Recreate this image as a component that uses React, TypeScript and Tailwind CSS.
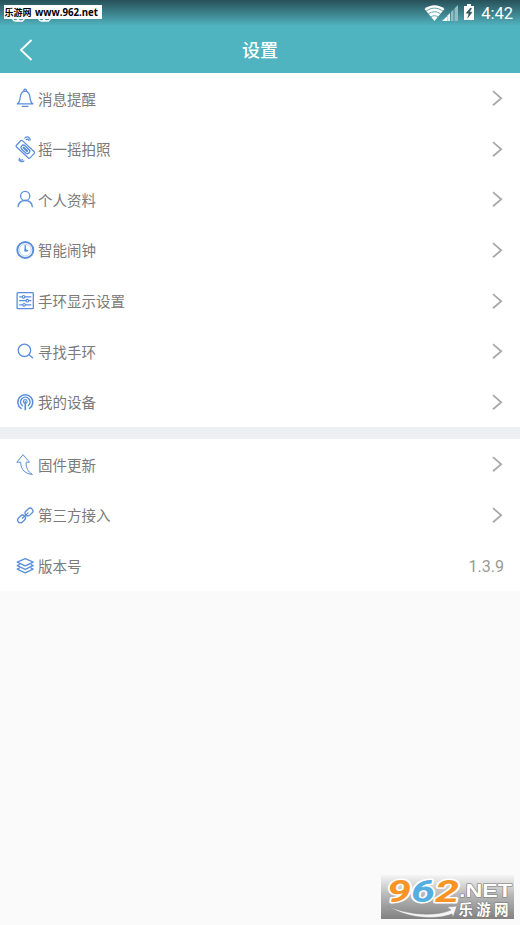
import type { ReactNode } from 'react';

interface SettingItem {
  label: string;
  icon: ReactNode;
  value?: string;
}

function Icon({ children }: { children: ReactNode }) {
  return (
    <svg
      className="h-5 w-5 shrink-0 overflow-visible"
      viewBox="0 0 20 20"
      fill="none"
      stroke="#5a8edb"
      strokeWidth="1.3"
      strokeLinecap="round"
      strokeLinejoin="round"
    >
      {children}
    </svg>
  );
}

const bell = (
  <Icon>
    <path d="M2.3 15.9h15.6c-2-1-2.3-2.4-2.6-4.5-.3-4.2-.9-8.2-5.2-8.2s-4.9 4-5.2 8.2c-.3 2.1-.6 3.5-2.6 4.5Z" />
    <path d="M8.9 3.1c-.6-2.6 3-2.6 2.4 0M7.3 18.4h5.6" />
  </Icon>
);

const shake = (
  <Icon>
    <g transform="rotate(43 10.3 10.4)">
      <rect x="1" y="6" width="18.6" height="8.6" rx="1.2" strokeWidth="1.2" />
      <rect x="5.2" y="7.9" width="10.2" height="4.8" rx="2.4" strokeWidth="1.3" />
      <path d="M8 10.3h4.6" strokeWidth="2.2" />
    </g>
    <path d="M9.8-.9c2.3-2.1 5-1.1 5.5 1.8M11.2.7c1.2-1.1 2.4-.6 2.7.8M4.2 19.4c.3 1.6 1.8 2.2 3.3 1.3M3.9 21c1.1 2 3.3 2.2 5 .9" strokeWidth="1.2" />
  </Icon>
);

const person = (
  <Icon>
    <circle cx="10.2" cy="6.9" r="4.6" />
    <path d="M3.1 17.7c.4-3.7 3-6.2 7.1-6.2s6.7 2.5 7.1 6.2" />
  </Icon>
);

const clock = (
  <Icon>
    <circle cx="10.3" cy="10" r="8" strokeWidth="1.9" />
    <circle cx="10.3" cy="10" r="5.9" stroke="#a7c5f1" strokeWidth=".7" />
    <path d="M10.2 5.5v5.2h2.5" />
    <path d="M10.3 9.3v1.4h1.3" strokeWidth="1.8" />
  </Icon>
);

const sliders = (
  <Icon>
    <rect x="2.1" y="1.7" width="16.2" height="16" rx=".8" />
    <path d="M4.6 5.8h2.6M10 5.8h5.9M4.6 9.7h6.3M13.7 9.7h2.2M4.6 13.8h3M10.5 13.8h5.4" strokeWidth="1.2" />
    <circle cx="8.6" cy="5.8" r="1.3" strokeWidth="1.1" />
    <circle cx="12.3" cy="9.7" r="1.3" strokeWidth="1.1" />
    <circle cx="9.1" cy="13.8" r="1.3" strokeWidth="1.1" />
  </Icon>
);

const search = (
  <Icon>
    <circle cx="9.4" cy="9.3" r="6.2" />
    <path d="m14 13.7 3.6 3.1" />
  </Icon>
);

const device = (
  <Icon>
    <path d="M6.1 16.4A7.5 7.5 0 1 1 14.5 16.4" strokeWidth="1.5" />
    <path d="M7.3 13.7a4.8 4.8 0 1 1 6 0" strokeWidth="1.4" />
    <circle cx="10.3" cy="9.5" r="1.9" strokeWidth="1.1" />
    <path d="M10.3 9.8v7.7" strokeWidth="1.7" />
  </Icon>
);

const update = (
  <Icon>
    <path d="M8.3 1 14.5 8.2h-3.4c-.3 5.3 1.7 9.6 6.3 12.2-6.6-.4-11.8-4.5-11.7-12.2H2.2Z" strokeWidth="1" />
  </Icon>
);

const link = (
  <Icon>
    <g transform="rotate(-43 10.2 10.6)">
      <rect x=".9" y="7.8" width="8.6" height="5.6" rx="2.8" />
      <rect x="11.1" y="7.8" width="8.6" height="5.6" rx="2.8" />
      <path d="M6.4 10.6h7.8" />
    </g>
  </Icon>
);

const layers = (
  <Icon>
    <path d="m10.2 3.6 8 3.5-8 3.8-8-3.8ZM4.3 9.6l-2.1 1 8 3.8 8-3.8-2.1-1M4.3 13.1l-2.1 1 8 3.8 8-3.8-2.1-1" strokeWidth="1.2" />
  </Icon>
);

const mainItems: SettingItem[] = [
  { label: '消息提醒', icon: bell },
  { label: '摇一摇拍照', icon: shake },
  { label: '个人资料', icon: person },
  { label: '智能闹钟', icon: clock },
  { label: '手环显示设置', icon: sliders },
  { label: '寻找手环', icon: search },
  { label: '我的设备', icon: device },
];

const otherItems: SettingItem[] = [
  { label: '固件更新', icon: update },
  { label: '第三方接入', icon: link },
  { label: '版本号', icon: layers, value: '1.3.9' },
];

function SettingRow({ item }: { item: SettingItem }) {
  return (
    <li className="flex h-[50.57px] items-center pr-4 pl-[15px]">
      {item.icon}
      <span className="ml-[3px] flex-1 pt-[5px] text-[14.5px] leading-5 text-[#7a7a7a]">{item.label}</span>
      {item.value ? (
        <span className="pt-[4px] font-[Roboto] text-[16px] leading-5 text-[#999]">{item.value}</span>
      ) : (
        <svg className="mr-px h-4 w-3" viewBox="0 0 12 16" fill="none" stroke="#aaa" strokeWidth="1.8">
          <path d="m2 1.1 8.2 7.1L2 15.3" />
        </svg>
      )}
    </li>
  );
}

function StatusBar() {
  return (
    <div className="flex h-[26px] items-center justify-end bg-linear-to-b from-[#285159] to-[#50b4c0] pr-[7px]">
      <svg className="h-[26px] w-[52px]" viewBox="424 0 52 26">
        <path d="M424.5 9c6-5 14-5 20 0l-10 12Z" fill="#fff" />
        <path d="M426 11.3c5-4.2 12-4.2 17 0M428.3 14c4-3 8.4-3 12.4 0M430.8 17c2.5-1.7 4.9-1.7 7.4 0" fill="none" stroke="#62a2aa" strokeWidth="1" />
        <path d="M442 21 447.5 16v5Z" fill="#fff" />
        <path d="M447.5 15.5 450 13v8h-2.5Z" fill="#e6f2f3" />
        <path d="M451 12l2.5-2.4V21H451ZM454.5 8.4 458 5v16h-3.5Z" fill="#8fbfc5" />
        <path d="M464 6h3V4h4v2h3v14h-10Z" fill="#fff" />
        <path d="m470.5 8-4.2 5.1 2.7.3-1.2 4.3 4.2-5.4-2.7-.4 2.2-3.4Z" fill="#30565b" stroke="#30565b" strokeWidth=".6" />
      </svg>
      <span className="ml-[5px] pt-[2px] font-[Roboto] text-[16.5px] leading-5 text-white">4:42</span>
    </div>
  );
}

function SiteLogo() {
  return (
    <svg className="absolute top-[875px] left-[381px] h-[44px] w-[133px]" viewBox="0 0 133 44">
      <defs>
        <linearGradient id="plate" x1="0" y1="0" x2="0" y2="1">
          <stop offset="0" stopColor="#f5f5f5" />
          <stop offset=".45" stopColor="#b8b8b8" />
          <stop offset="1" stopColor="#818181" />
        </linearGradient>
      </defs>
      <rect width="133" height="44" fill="url(#plate)" />
      <path d="M7 31c19 9 47 11 63 4l-4-3 10-1-4 11-1-3c-19 7-48 3-64-8Z" fill="#f5f5f5" stroke="#888" strokeWidth=".5" />
      <g
        className="font-[Roboto] text-[32px] font-bold italic"
        stroke="#fff"
        strokeWidth="3"
        strokeLinejoin="round"
        paintOrder="stroke"
      >
        <text x="6" y="27" fill="#f79425" textLength="24" lengthAdjust="spacingAndGlyphs">9</text>
        <text x="30" y="27" fill="#55aee1" textLength="24" lengthAdjust="spacingAndGlyphs">6</text>
        <text x="54" y="27" fill="#f79425" textLength="24" lengthAdjust="spacingAndGlyphs">2</text>
      </g>
      <g fill="#fff" stroke="#777" strokeWidth="1" paintOrder="stroke">
        <text className="font-['Liberation_Sans'] text-[19px] font-bold" x="78" y="21.5" textLength="53" lengthAdjust="spacingAndGlyphs">.NET</text>
        <text className="font-['Noto_Sans_CJK_SC'] text-[14.5px] font-bold" x="77.5" y="39.5" textLength="50">乐游网</text>
      </g>
    </svg>
  );
}

export default function App() {
  return (
    <div className="relative h-[925px] w-[520px] overflow-hidden bg-[#fafafa] font-[Roboto,'Noto_Sans_CJK_SC',sans-serif]">
      <header className="h-[73px] bg-[#50b4c0]">
        <StatusBar />
        <div className="grid h-[47px] grid-cols-3 items-center">
          <svg className="ml-[19px] h-[22px] w-[14px]" viewBox="0 0 14 22" fill="none" stroke="#fff" strokeWidth="1.8">
            <path d="M12.5 1 2 11l10.5 10" />
          </svg>
          <h1 className="pt-[2px] text-center text-[18px] leading-6 font-medium text-white">设置</h1>
        </div>
      </header>

      <ul className="bg-white">
        {mainItems.map((item) => (
          <SettingRow key={item.label} item={item} />
        ))}
      </ul>
      <div className="h-3 bg-[#ecf0f3]" />
      <ul className="bg-white">
        {otherItems.map((item) => (
          <SettingRow key={item.label} item={item} />
        ))}
      </ul>

      {/* notification icons peeking out below the site tag */}
      <svg className="absolute top-[14px] left-[10px] h-[9px] w-[44px]" viewBox="0 0 44 9" fill="none" stroke="#fff" strokeWidth="1.4">
        <path d="M2 4c2 4 5 4 6 1 1 3 5 3 7-1M5 7h8M28 4c2 4 5 4 6 1 1 3 5 3 7-1M31 7h8" />
      </svg>
      <div className="absolute top-[5px] left-[4px] flex h-[14px] w-[98px] items-center bg-white text-black">
        <svg className="h-[14px] w-[98px]" viewBox="0 0 98 14">
          <text className="font-['Noto_Sans_CJK_SC'] text-[9px] font-bold" x=".5" y="11" textLength="27">乐游网</text>
          <text className="font-['Open_Sans'] text-[10px] font-bold" x="31" y="11" textLength="63" lengthAdjust="spacingAndGlyphs">www.962.net</text>
        </svg>
      </div>
      <SiteLogo />
    </div>
  );
}
